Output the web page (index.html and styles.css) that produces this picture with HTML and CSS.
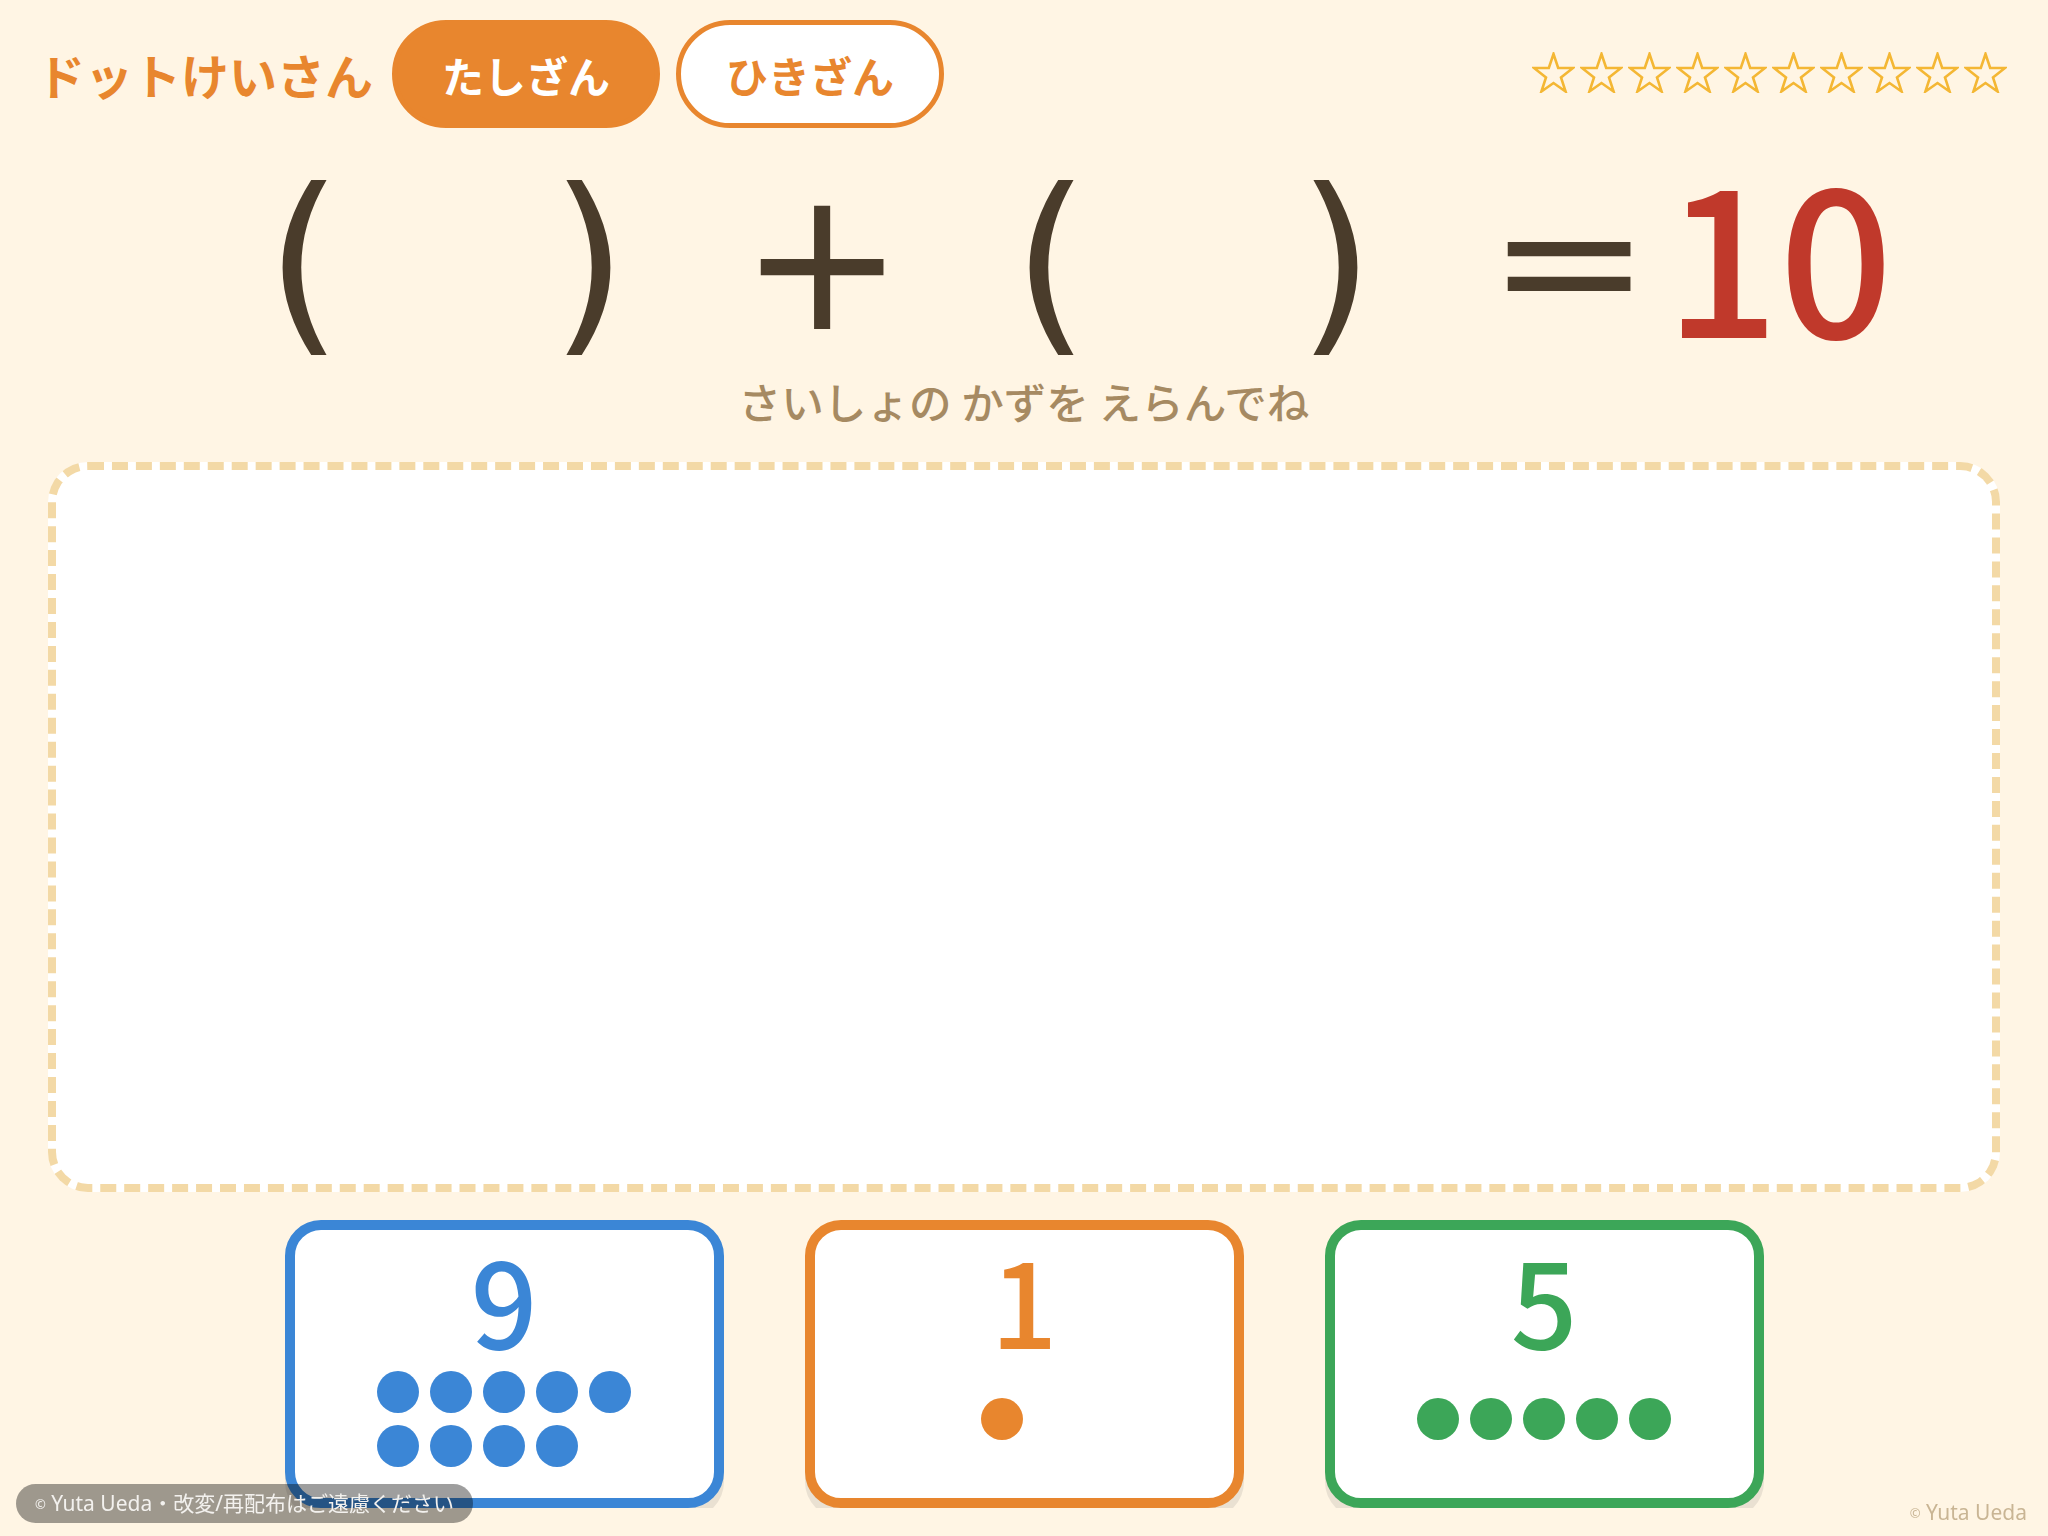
FILE: index.html
```html
<!DOCTYPE html>
<html lang="ja">
<head>
  <meta charset="UTF-8" />
  <meta name="viewport" content="width=device-width, initial-scale=1.0"/>
  <title>ドットけいさん</title>
  <link rel="stylesheet" href="styles.css">
</head>
<body>

  <!-- Top bar: title, mode switch, stars -->
  <header class="top-bar">
    <div class="modes">
      <h1 class="app-title">ドットけいさん</h1>
      <button class="mode-btn active">たしざん</button>
      <button class="mode-btn">ひきざん</button>
    </div>
    <div class="stars" id="stars"></div>
  </header>

  <!-- Equation -->
  <section class="equation">
    <div class="slot"><span>(</span><span>)</span></div>
    <span class="op plus">+</span>
    <div class="slot"><span>(</span><span>)</span></div>
    <span class="op equals">=</span>
    <span class="target">10</span>
  </section>
  <p class="hint">さいしょの かずを えらんでね</p>

  <!-- Drop area -->
  <div class="board"></div>

  <!-- Number cards -->
  <div class="cards" id="cards"></div>

  <div class="notice"><span class="copy">©</span> Yuta Ueda・改変/再配布はご遠慮ください</div>
  <div class="credit"><span class="copy">©</span> Yuta Ueda</div>

  <script>
    const STAR = '<svg viewBox="0 0 43 41" width="43" height="41"><polygon points="21.5,2 26.2,16 41,16 29,25.5 33.6,39.5 21.5,31 9.4,39.5 14,25.5 2,16 16.8,16" /></svg>';
    document.getElementById("stars").innerHTML = STAR.repeat(10);

    const cards = [
      { value: 9, color: "blue" },
      { value: 1, color: "orange" },
      { value: 5, color: "green" }
    ];

    const cardRow = document.getElementById("cards");
    cards.forEach(c => {
      const card = document.createElement("div");
      card.className = `card card-${c.color}`;
      card.innerHTML = `<div class="num">${c.value}</div><div class="dots">${"<i></i>".repeat(c.value)}</div>`;
      cardRow.appendChild(card);
    });
  </script>
</body>
</html>
```

FILE: styles.css
```css
body {
  font-family: "Noto Sans CJK JP", "Noto Sans", sans-serif;
  background: #fff5e4;
  margin: 0;
  color: #4a3c2b;
}

.top-bar {
  display: flex;
  justify-content: space-between;
  align-items: center;
  padding: 20px 41px 0 37px;
}

.modes {
  display: flex;
  align-items: center;
  gap: 16px;
}

.app-title {
  margin: 0 3px 0 0;
  font-size: 48px;
  font-weight: 700;
  color: #e8862e;
}

.mode-btn {
  width: 268px;
  height: 108px;
  border: 5px solid #e8862e;
  border-radius: 54px;
  background: white;
  color: #e8862e;
  font-family: inherit;
  font-size: 42px;
  font-weight: 700;
  cursor: pointer;
}

.mode-btn.active {
  background: #e8862e;
  color: white;
}

.stars {
  display: flex;
  gap: 5px;
  margin-bottom: 4px;
}

.stars svg polygon {
  fill: none;
  stroke: #f4b734;
  stroke-width: 2.6;
}

/* ( ) + ( ) = 10 */
.equation {
  display: flex;
  align-items: center;
  height: 230px;
  margin-top: 18px;
  padding-left: 264px;
  font-family: "DejaVu Sans", sans-serif;
  font-size: 196px;
  line-height: 1;
}

.slot {
  display: flex;
  justify-content: space-between;
  width: 365px;
}

.slot span {
  width: 80px;
  text-align: center;
}

.op {
  width: 140px;
  text-align: center;
}

.plus {
  margin: 0 131px 0 111px;
}

.equals {
  margin-left: 111px;
  transform: scaleY(0.88);
}

.target {
  margin: 0 0 21px 38px;
  font-family: "Noto Sans CJK JP", sans-serif;
  font-size: 200px;
  font-weight: 500;
  color: #c0392b;
}

.hint {
  margin: 0;
  text-align: center;
  font-size: 42.6px;
  line-height: 50px;
  font-weight: 500;
  color: #a68a62;
}

.board {
  height: 714px;
  margin: 36px 48px 0;
  background: white;
  border: 8px dashed #f3d9a6;
  border-radius: 40px;
}

.cards {
  display: flex;
  justify-content: center;
  gap: 81px;
  margin-top: 28px;
}

.card {
  box-sizing: border-box;
  width: 439px;
  height: 288px;
  padding-top: 10px;
  background: white;
  border: 10px solid;
  border-radius: 36px;
  box-shadow: 0 10px 0 #eae1d2;
  text-align: center;
}

.num {
  font-size: 117px;
  font-weight: 500;
  line-height: 1;
}

.dots {
  display: grid;
  grid-template-columns: repeat(5, 42px);
  gap: 12px 11px;
  justify-content: center;
  align-content: center;
  height: 123px;
}

.dots i {
  width: 42px;
  height: 42px;
  border-radius: 50%;
  background: currentColor;
}

.card-blue { border-color: #3b86d6; color: #3b86d6; }
.card-orange { border-color: #e8862e; color: #e8862e; }
.card-green { border-color: #3ca658; color: #3ca658; }

.card-orange .dots {
  grid-template-columns: 42px;
  padding-right: 44px;
}

.notice {
  position: fixed;
  left: 16px;
  top: 1484px;
  height: 39px;
  line-height: 39px;
  padding: 0 19px;
  border-radius: 20px;
  background: rgba(0, 0, 0, 0.38);
  color: #f3f1ee;
  font-family: "Noto Sans", "Noto Sans CJK JP", sans-serif;
  font-size: 21px;
}

.credit {
  position: fixed;
  right: 21px;
  bottom: 10px;
  color: #c9b594;
  font-family: "Noto Sans", sans-serif;
  font-size: 21px;
}

.copy {
  font-size: 13px;
  vertical-align: 2px;
}
```
